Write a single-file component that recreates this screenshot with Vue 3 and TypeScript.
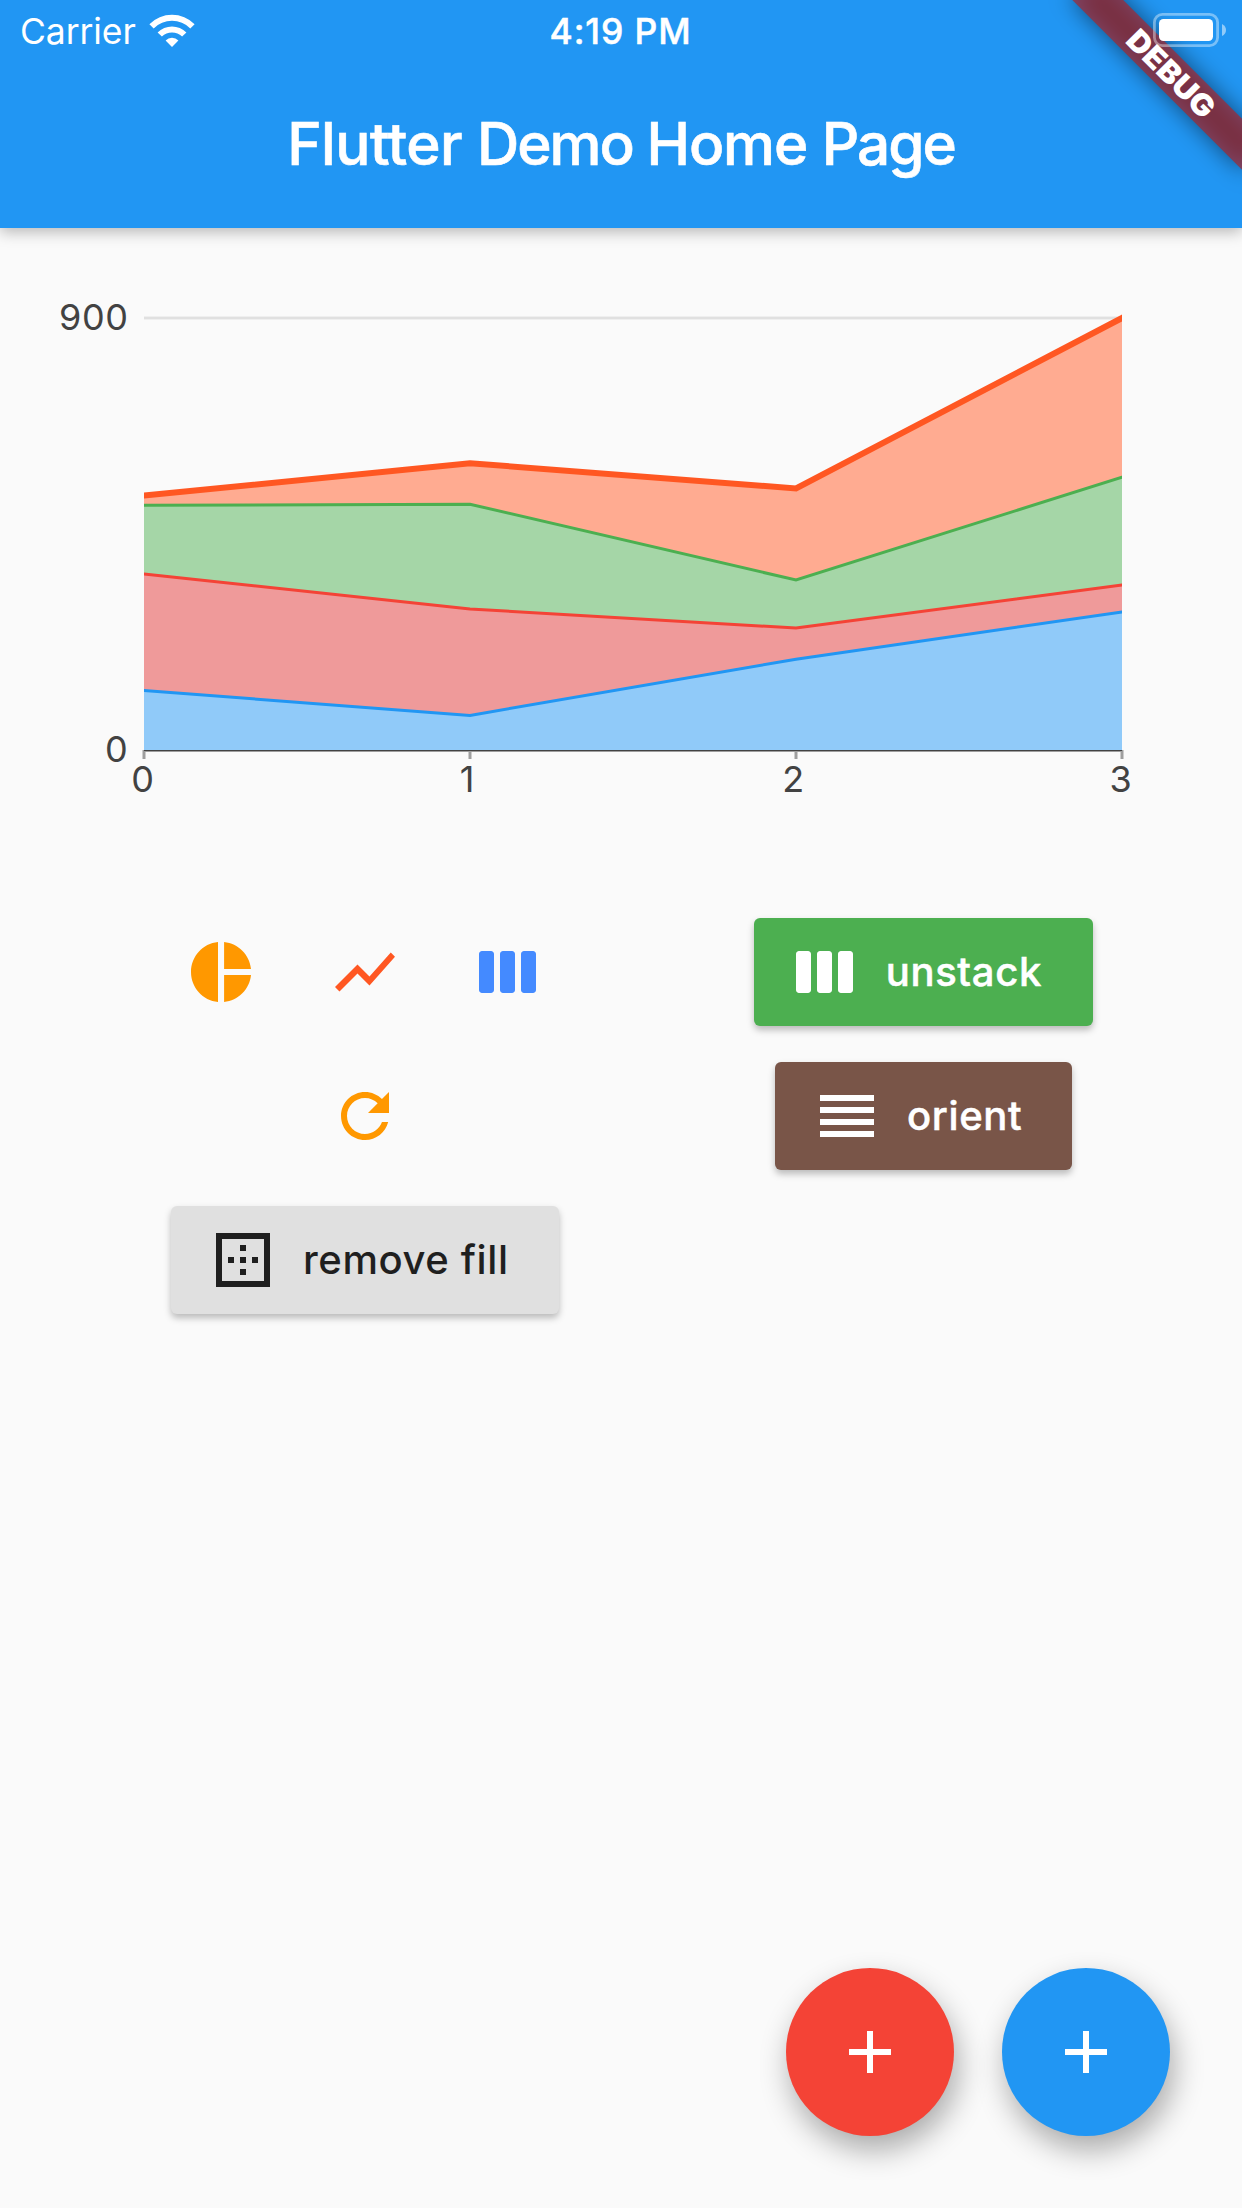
<script setup lang="ts">
interface Series {
  name: string
  line: string
  fill: string
  width: number
  y: number[]
}

const xs: number[] = [144, 470, 796, 1122]
const baseline = 750

// Stacked series, painted from the tallest stack down to the base one.
const series: Series[] = [
  { name: 'orange', line: '#ff5722', fill: '#ffab91', width: 6, y: [495.6, 463.2, 488.4, 318] },
  { name: 'green', line: '#4caf50', fill: '#a5d6a7', width: 3, y: [505.3, 504.2, 580, 477.2] },
  { name: 'red', line: '#f44336', fill: '#ef9a9a', width: 3, y: [574, 608.9, 628.1, 585] },
  { name: 'blue', line: '#2196f3', fill: '#90caf9', width: 3, y: [690.6, 715.4, 659.2, 611.9] },
]

const points = (s: Series): string => s.y.map((y, i) => `${xs[i]},${y}`).join(' ')
const area = (s: Series): string => `${points(s)} 1122,${baseline} 144,${baseline}`
const extended = (s: Series): string => {
  const n = s.y.length - 1
  const before = s.y[0] - (s.y[1] - s.y[0]) * (10 / 326)
  const after = s.y[n] + (s.y[n] - s.y[n - 1]) * (10 / 326)
  return `134,${before} ${points(s)} 1132,${after}`
}
</script>

<template>
  <div class="screen">
    <header class="app-bar">
      <div class="status">
        <div class="carrier">
          <span class="carrier-name">Carrier</span>
          <svg class="wifi" width="46" height="34" viewBox="0 0 46 34">
            <path d="M0.4 10.2A32 32 0 0 1 45.6 10.2L41.3 14.4A26 26 0 0 0 4.7 14.4Z" fill="#fff" />
            <path d="M8.6 18.4A20.4 20.4 0 0 1 37.4 18.4L33.1 22.6A14.4 14.4 0 0 0 12.9 22.6Z" fill="#fff" />
            <path d="M16.6 26.4A9 9 0 0 1 29.4 26.4L23 33Z" fill="#fff" />
          </svg>
        </div>
        <div class="time">4:19 PM</div>
        <div class="status-end"></div>
      </div>
      <h1 class="title"><span class="loose">Flutter </span><span class="tight">Demo </span>Home <span class="tight">Page</span></h1>
    </header>

    <svg class="chart" width="1242" height="590" viewBox="0 228 1242 590">
      <defs>
        <clipPath id="plot"><rect x="144" y="300" width="978" height="460" /></clipPath>
      </defs>
      <rect x="144" y="316" width="978" height="4" fill="#efefef" />
      <rect x="144" y="317" width="978" height="2" fill="#e0e0e0" />
      <g clip-path="url(#plot)">
        <template v-for="s in series" :key="s.name">
          <polygon :points="area(s)" :fill="s.fill" />
        </template>
        <polyline
          v-for="s in series"
          :key="s.name + '-line'"
          :points="extended(s)"
          :stroke="s.line"
          :stroke-width="s.width"
          fill="none"
        />
      </g>
      <rect v-for="x in xs" :key="x" :x="x - 1.5" y="750" width="3" height="9" fill="#9e9e9e" />
      <rect x="144" y="750" width="978" height="1" fill="#424242" />
      <rect x="144" y="751" width="978" height="1" fill="#9e9e9e" />
      <g class="tick">
        <text x="59" y="330" textLength="69">900</text>
        <text x="105" y="762">0</text>
        <text x="142.7" y="792" text-anchor="middle">0</text>
        <text x="467" y="792" text-anchor="middle">1</text>
        <text x="793.3" y="792" text-anchor="middle">2</text>
        <text x="1120.5" y="792" text-anchor="middle">3</text>
      </g>
    </svg>

    <main class="controls">
      <div class="cell">
        <button class="icon-btn amber">
          <svg viewBox="0 0 24 24"><path d="M11 2v20c-5.07-.5-9-4.79-9-10s3.93-9.5 9-10zm2.03 0v8.99H22c-.47-4.74-4.24-8.52-8.97-8.99zm0 11.01V22c4.74-.47 8.5-4.25 8.97-8.99h-8.97z" /></svg>
        </button>
        <button class="icon-btn deep">
          <svg viewBox="0 0 24 24"><path d="M3.5 18.49l6-6.01 4 4L22 6.92l-1.41-1.41-7.09 7.97-4-4L2 16.99z" /></svg>
        </button>
        <button class="icon-btn accent">
          <svg viewBox="0 0 24 24"><path d="M6 5H3c-.55 0-1 .45-1 1v12c0 .55.45 1 1 1h3c.55 0 1-.45 1-1V6c0-.55-.45-1-1-1zm14 0h-3c-.55 0-1 .45-1 1v12c0 .55.45 1 1 1h3c.55 0 1-.45 1-1V6c0-.55-.45-1-1-1zm-7 0h-3c-.55 0-1 .45-1 1v12c0 .55.45 1 1 1h3c.55 0 1-.45 1-1V6c0-.55-.45-1-1-1z" /></svg>
        </button>
      </div>
      <div class="cell">
        <button class="raised unstack">
          <svg viewBox="0 0 24 24"><path d="M6 5H3c-.55 0-1 .45-1 1v12c0 .55.45 1 1 1h3c.55 0 1-.45 1-1V6c0-.55-.45-1-1-1zm14 0h-3c-.55 0-1 .45-1 1v12c0 .55.45 1 1 1h3c.55 0 1-.45 1-1V6c0-.55-.45-1-1-1zm-7 0h-3c-.55 0-1 .45-1 1v12c0 .55.45 1 1 1h3c.55 0 1-.45 1-1V6c0-.55-.45-1-1-1z" /></svg>
          <span>unstack</span>
        </button>
      </div>
      <div class="cell">
        <button class="icon-btn amber">
          <svg viewBox="0 0 24 24"><path d="M17.65 6.35C16.2 4.9 14.21 4 12 4c-4.42 0-7.99 3.58-7.99 8s3.57 8 7.99 8c3.73 0 6.84-2.55 7.73-6h-2.08c-.82 2.33-3.04 4-5.65 4-3.31 0-6-2.69-6-6s2.69-6 6-6c1.66 0 3.14.69 4.22 1.78L13 11h7V4l-2.35 2.35z" /></svg>
        </button>
      </div>
      <div class="cell">
        <button class="raised orient">
          <svg viewBox="0 0 24 24"><path d="M3 15h18v-2H3v2zm0 4h18v-2H3v2zm0-8h18V9H3v2zm0-6v2h18V5H3z" /></svg>
          <span>orient</span>
        </button>
      </div>
      <div class="cell">
        <button class="raised fill">
          <svg viewBox="0 0 24 24"><path d="M13 7h-2v2h2V7zm0 4h-2v2h2v-2zm4 0h-2v2h2v-2zM3 3v18h18V3H3zm16 16H5V5h14v14zm-6-4h-2v2h2v-2zm-4-4H7v2h2v-2z" /></svg>
          <span>remove fill</span>
        </button>
      </div>
    </main>

    <footer class="fabs">
      <button class="fab red"><svg viewBox="0 0 24 24"><path d="M19 13h-6v6h-2v-6H5v-2h6V5h2v6h6v2z" /></svg></button>
      <button class="fab blue"><svg viewBox="0 0 24 24"><path d="M19 13h-6v6h-2v-6H5v-2h6V5h2v6h6v2z" /></svg></button>
    </footer>

    <svg class="banner" width="300" height="240" viewBox="942 0 300 240">
      <defs>
        <filter id="soft" x="-30%" y="-150%" width="160%" height="400%">
          <feGaussianBlur stdDeviation="11.9" />
        </filter>
      </defs>
      <g transform="translate(1242 0) rotate(45)">
        <rect x="-120" y="84" width="240" height="36" fill="#000" fill-opacity="0.5" filter="url(#soft)" />
        <rect x="-130" y="84" width="260" height="36" fill="#b71c1c" fill-opacity="0.627" />
        <text class="banner-text" x="2" y="113" text-anchor="middle" textLength="111" lengthAdjust="spacingAndGlyphs">DEBUG</text>
      </g>
      <rect x="1154.4" y="14.4" width="63.2" height="31.2" rx="8" fill="none" stroke="#fff" stroke-opacity="0.4" stroke-width="2.8" />
      <rect x="1159" y="19" width="54" height="22" rx="4.5" fill="#fff" />
      <path d="M1222 24Q1226 26 1226 30T1222 36Z" fill="#fff" fill-opacity="0.5" />
    </svg>
  </div>
</template>

<style>
body {
  margin: 0;
  background: #fafafa;
}
</style>

<style scoped>
.screen {
  position: relative;
  display: flex;
  flex-direction: column;
  width: 1242px;
  height: 2208px;
  overflow: hidden;
  background: #fafafa;
  font-family: Inter, 'Liberation Sans', sans-serif;
}
.app-bar {
  flex: none;
  height: 228px;
  background: #2196f3;
  color: #fff;
  box-shadow: 0 4px 14px rgba(0, 0, 0, 0.27);
}
.status {
  display: grid;
  grid-template-columns: 1fr auto 1fr;
  align-items: center;
  height: 60px;
}
.carrier {
  display: flex;
  align-items: center;
  padding-left: 20px;
}
.carrier-name {
  width: 129px;
  font-size: 35.5px;
  line-height: 60px;
  letter-spacing: -0.1px;
  padding-top: 2px;
}
.wifi {
  flex: none;
}
.time {
  padding: 2px 1px 0 0;
  font-size: 35.5px;
  font-weight: 500;
  line-height: 60px;
  letter-spacing: 0.9px;
  white-space: nowrap;
  -webkit-text-stroke: 0.5px #fff;
}
.title {
  margin: 0;
  height: 168px;
  font-size: 58.5px;
  font-weight: 500;
  line-height: 168px;
  text-align: center;
  letter-spacing: -1.1px;
  white-space: nowrap;
  -webkit-text-stroke: 0.6px #fff;
}
.loose {
  letter-spacing: -0.6px;
}
.tight {
  letter-spacing: -2px;
}
.chart {
  display: block;
  flex: none;
}
.tick {
  font-size: 36px;
  fill: #424242;
}
.controls {
  display: grid;
  grid-template-columns: 558px 559px;
  grid-auto-rows: 144px;
  padding: 82px 0 0 86px;
}
.cell {
  display: flex;
  align-items: center;
  justify-content: center;
}
button {
  border: 0;
  font-family: inherit;
}
svg {
  fill: currentColor;
}
.icon-btn {
  display: flex;
  align-items: center;
  justify-content: center;
  width: 144px;
  height: 144px;
  padding: 0;
  background: none;
}
.icon-btn svg,
.raised svg,
.fab svg {
  flex: none;
  width: 72px;
  height: 72px;
}
.amber {
  color: #ff9800;
}
.deep {
  color: #ff5722;
}
.accent {
  color: #448aff;
}
.raised {
  display: flex;
  align-items: center;
  gap: 24px;
  box-sizing: border-box;
  height: 108px;
  padding: 0 0 0 36px;
  border-radius: 6px;
  box-shadow: 0 4px 7px rgba(0, 0, 0, 0.26);
  color: #fff;
  font-size: 40px;
  font-weight: 500;
  letter-spacing: 0.65px;
  white-space: nowrap;
}
.raised span {
  margin-bottom: 2px;
}
.unstack,
.orient {
  -webkit-text-stroke: 0.5px #fff;
}
.unstack {
  width: 339.5px;
  background: #4caf50;
}
.orient {
  width: 297px;
  background: #795548;
}
.fill {
  width: 388px;
  background: #e0e0e0;
  color: #1f1f1f;
  letter-spacing: 0.6px;
}
.fabs {
  display: flex;
  justify-content: flex-end;
  gap: 48px;
  margin-top: auto;
  padding: 0 72px 72px 0;
}
.fab {
  display: flex;
  align-items: center;
  justify-content: center;
  width: 168px;
  height: 168px;
  padding: 0;
  border-radius: 50%;
  box-shadow: 4px 14px 30px rgba(0, 0, 0, 0.32);
  color: #fff;
}
.red {
  background: #f44336;
}
.blue {
  background: #2196f3;
}
.banner {
  position: absolute;
  top: 0;
  right: 0;
}
.banner-text {
  font-size: 30px;
  font-weight: 900;
  fill: #fff;
}
</style>
